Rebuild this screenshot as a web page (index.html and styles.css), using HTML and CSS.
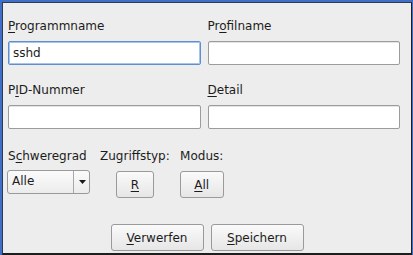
FILE: index.html
```html
<!DOCTYPE html>
<html lang="de">
<head>
<meta charset="utf-8">
<title>Profil</title>
<link rel="stylesheet" href="styles.css">
</head>
<body>
<div class="frame">
  <div class="inner">
    <div class="fields">
      <div class="field">
        <label class="lbl"><u>P</u>rogrammname</label>
        <div class="entry focus">sshd</div>
      </div>
      <div class="field">
        <label class="lbl">Pr<u>o</u>filname</label>
        <div class="entry"></div>
      </div>
      <div class="field">
        <label class="lbl">P<u>I</u>D-Nummer</label>
        <div class="entry"></div>
      </div>
      <div class="field">
        <label class="lbl"><u>D</u>etail</label>
        <div class="entry"></div>
      </div>
    </div>
    <div class="opts">
      <div class="opt left">
        <label class="lbl">S<u>c</u>hweregrad</label>
        <div class="combo">
          <span class="combo-text">Alle</span>
          <span class="combo-arrow"><svg width="7" height="4" viewBox="0 0 7 4"><path d="M0 0H7L3.5 4Z" fill="#1a1a1a"/></svg></span>
        </div>
      </div>
      <div class="opt">
        <label class="lbl">Zugriffstyp:</label>
        <button class="btn small"><u>R</u></button>
      </div>
      <div class="opt">
        <label class="lbl">Modus:</label>
        <button class="btn small wide"><u>A</u>ll</button>
      </div>
    </div>
    <div class="actions">
      <button class="btn big"><u>V</u>erwerfen</button>
      <button class="btn big"><u>S</u>peichern</button>
    </div>
  </div>
</div>
</body>
</html>
```
FILE: styles.css
```css
html, body {
  margin: 0;
  padding: 0;
  background: #ededed;
}
body {
  font-family: "DejaVu Sans", sans-serif;
  font-size: 12px;
  color: #1c1c1c;
}
.frame {
  width: 413px;
  height: 255px;
  box-sizing: border-box;
  background: #3f6fc6;
  padding: 2px 1px 0 2px;
}
.inner {
  box-sizing: border-box;
  height: 253px;
  background: #ededed;
  border-left: 1px solid #2b3a55;
  border-top: 1px solid #2b3a55;
  border-right: 1px solid #1e1e1e;
  border-bottom: 2px solid #1e1e1e;
  padding: 16px 11px 0 5px;
}
.fields {
  display: grid;
  grid-template-columns: 1fr 1fr;
  column-gap: 7px;
  row-gap: 18px;
}
.field {
  display: flex;
  flex-direction: column;
}
.lbl {
  display: block;
  line-height: 15px;
  white-space: nowrap;
}
u {
  text-decoration: underline;
  text-underline-offset: 2px;
}
.entry {
  margin-top: 7px;
  height: 24px;
  box-sizing: border-box;
  background: #ffffff;
  border: 1px solid #9c9c9c;
  border-radius: 2px;
  box-shadow: inset 0 1px 0 #e4e4e4;
  padding: 0 4px;
  line-height: 22px;
  font-size: 12px;
}
.entry.focus {
  border-color: #5f8fd3;
  box-shadow: inset 0 0 0 1px #a9c4ea;
  padding-left: 4px;
}
.opts {
  display: flex;
  gap: 10px;
  margin-top: 20px;
  padding-left: 0;
}
.opt {
  display: flex;
  flex-direction: column;
  align-items: center;
}
.opt.left {
  align-items: flex-start;
}
.combo {
  margin-top: 6px;
  width: 83px;
  height: 24px;
  box-sizing: border-box;
  border: 1px solid #9a9a9a;
  border-radius: 3px;
  background: linear-gradient(#fbfbfb, #ececec);
  display: flex;
  align-items: stretch;
  margin-left: -1px;
}
.combo-text {
  flex: 1;
  padding-left: 4px;
  line-height: 20px;
}
.combo-arrow {
  width: 15px;
  border-left: 1px solid #a8a8a8;
  display: flex;
  align-items: center;
  justify-content: center;
}
.combo-arrow svg {
  display: block;
  margin-left: 1px;
}
.btn {
  font-family: "DejaVu Sans", sans-serif;
  font-size: 12px;
  color: #1c1c1c;
  background: linear-gradient(#fafafa, #e6e6e6);
  border: 1px solid #9a9a9a;
  border-radius: 3px;
  box-sizing: border-box;
  padding: 0;
  height: 27px;
  cursor: default;
}
.btn.small {
  margin-top: 7px;
  width: 38px;
}
.btn.small.wide {
  width: 44px;
}
.actions {
  display: flex;
  justify-content: center;
  gap: 7px;
  margin: 26px -11px 0 -5px;
}
.btn.big {
  width: 93px;
}
```
